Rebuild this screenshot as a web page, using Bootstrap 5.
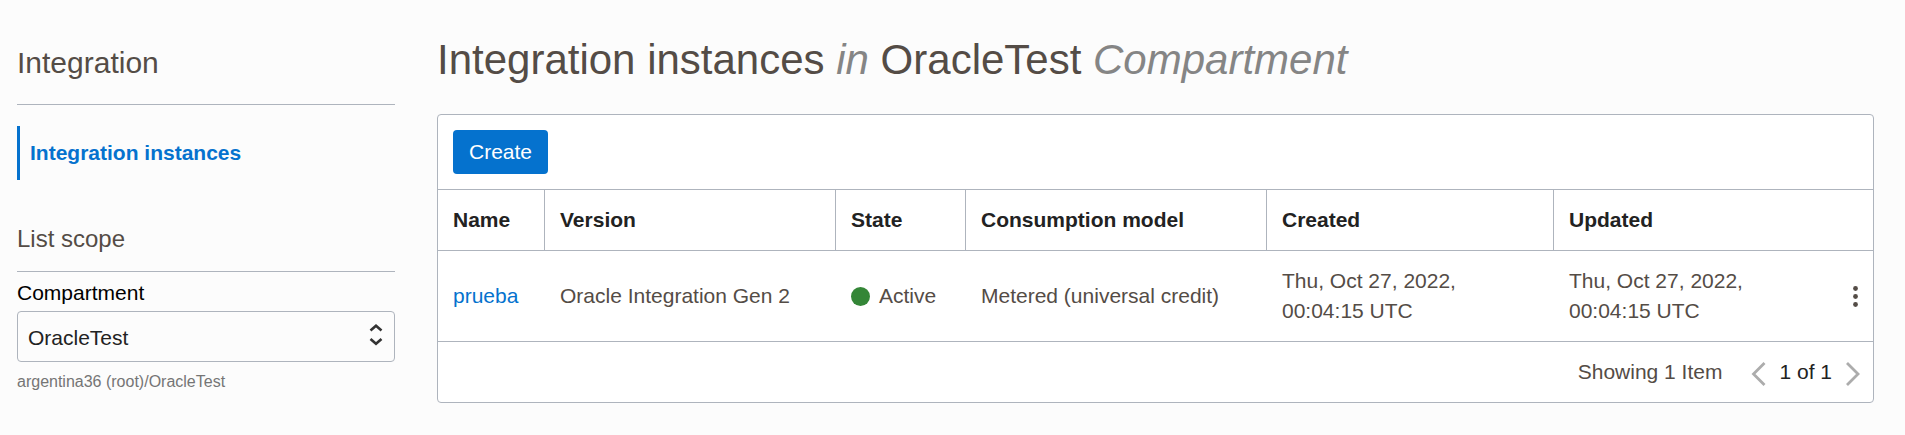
<!DOCTYPE html>
<html lang="en">
<head>
<meta charset="utf-8">
<meta name="viewport" content="width=device-width, initial-scale=1">
<title>Integration instances</title>
<link href="https://cdn.jsdelivr.net/npm/bootstrap@5.3.0/dist/css/bootstrap.min.css" rel="stylesheet">
<style>
  :root { --line: #aeb4bd; --ink: #544c46; --brand: #0572ce; --strong: #222; }
  body { background: #fcfcfc; color: var(--ink); font-family: "Liberation Sans", Arial, sans-serif; font-size: 21px; line-height: 30px; }
  a { color: var(--brand); }
  .page { padding: 35px 31px 33px 17px; gap: 42px; }
  .side { flex: 0 0 378px; padding-top: 10px; }
  .content { min-width: 0; }
  .side-title { font-size: 30px; line-height: 36px; font-weight: 400; padding-bottom: 23px; margin-bottom: 21px; border-bottom: 1px solid var(--line); }
  .side-link { border-left: 3px solid var(--brand); padding: 12px 10px; font-weight: 700; margin-bottom: 44px; }
  .scope-title { font-size: 24px; line-height: 30px; font-weight: 400; padding-bottom: 17px; margin-bottom: 6px; border-bottom: 1px solid var(--line); }
  .scope-label { color: #000; margin-bottom: 3px; }
  .scope-select { appearance: none; background: #fcfcfc; color: var(--strong); border: 1px solid var(--line); border-radius: 4px; padding: 11px 32px 8px 10px; font-size: 21px; line-height: 30px; }
  .scope-arrows { right: 12px; top: 12px; pointer-events: none; }
  .hint { font-size: 16px; line-height: 24px; color: #757575; margin-top: 8px; }
  .headline { font-size: 42px; line-height: 50px; font-weight: 400; margin-bottom: 29px; }
  .headline em { color: #858585; }
  .panel { background: #fff; border: 1px solid var(--line); border-radius: 4px; }
  .panel-tools { padding: 15px; border-bottom: 1px solid var(--line); }
  .btn-create { --bs-btn-color: #fff; --bs-btn-bg: var(--brand); --bs-btn-hover-color: #fff; --bs-btn-hover-bg: #045fab; border: 0; border-radius: 4px; padding: 7px 16px; font-size: 21px; line-height: 30px; }
  .grid-table { table-layout: fixed; border-collapse: separate; border-spacing: 0; min-width: 1300px; color: var(--ink); --bs-table-bg: #fff; --bs-table-color: var(--ink); }
  .grid-table > :not(caption) > * > * { padding: 15px; border-width: 0 0 1px; border-bottom: 1px solid var(--line); }
  .grid-table > thead > tr > th { color: var(--strong); }
  .grid-table > thead > tr > th:not(.last) { border-right: 1px solid var(--line); }
  .c-name { width: 107px; } .c-version { width: 291px; } .c-state { width: 130px; }
  .c-model { width: 301px; } .c-created { width: 287px; } .c-menu { width: 90px; }
  .dot { width: 19px; height: 19px; border-radius: 50%; background: #348637; margin-right: 9px; }
  .plain { background: none; border: 0; padding: 0; line-height: 0; }
  .pager { padding: 15px 12px; }
  .pager .plain { padding-top: 3px; }
  .pager .plain:disabled { color: #acacac; }
  .page-count { color: var(--strong); padding: 0 13px; }
</style>
</head>
<body>
<div class="page d-flex align-items-start">
  <aside class="side">
    <h2 class="side-title">Integration</h2>
    <nav><a class="side-link d-block text-decoration-none" href="#" aria-current="page">Integration instances</a></nav>
    <h3 class="scope-title">List scope</h3>
    <label class="scope-label d-block" for="compartment">Compartment</label>
    <div class="position-relative">
      <select class="scope-select d-block w-100" id="compartment"><option>OracleTest</option></select>
      <svg class="scope-arrows position-absolute" width="14" height="24" viewBox="0 0 14 24" fill="none" stroke="#333" stroke-width="2.6" aria-hidden="true"><path d="M1.5 7.5 7 2.8l5.500 4.700M1.500 16 7 20.700l5.500-4.700"/></svg>
    </div>
    <div class="hint">argentina36 (root)/OracleTest</div>
  </aside>
  <main class="content flex-fill">
    <h1 class="headline">Integration instances <em>in</em> OracleTest <em>Compartment</em></h1>
    <section class="panel">
      <div class="panel-tools"><button type="button" class="btn btn-create d-block">Create</button></div>
      <div class="table-responsive">
        <table class="table grid-table align-middle mb-0">
          <colgroup><col class="c-name"><col class="c-version"><col class="c-state"><col class="c-model"><col class="c-created"><col><col class="c-menu"></colgroup>
          <thead>
            <tr><th scope="col">Name</th><th scope="col">Version</th><th scope="col">State</th><th scope="col">Consumption model</th><th scope="col">Created</th><th scope="col" class="last" colspan="2">Updated</th></tr>
          </thead>
          <tbody>
            <tr>
              <td><a class="text-decoration-none" href="#">prueba</a></td>
              <td>Oracle Integration Gen 2</td>
              <td><span class="d-flex align-items-center"><span class="dot"></span>Active</span></td>
              <td>Metered (universal credit)</td>
              <td>Thu, Oct 27, 2022, 00:04:15 UTC</td>
              <td>Thu, Oct 27, 2022, 00:04:15 UTC</td>
              <td><button type="button" class="plain d-block ms-auto" aria-label="Actions"><svg width="5" height="21" viewBox="0 0 5 21" fill="#544c46"><circle cx="2.5" cy="2.5" r="2.4"/><circle cx="2.5" cy="10.5" r="2.4"/><circle cx="2.5" cy="18.5" r="2.4"/></svg></button></td>
            </tr>
          </tbody>
        </table>
      </div>
      <div class="pager d-flex justify-content-end align-items-center">
        <span class="me-4">Showing 1 Item</span>
        <button type="button" class="plain ms-1" disabled aria-label="Previous page"><svg width="16" height="26" viewBox="0 0 16 26" fill="none" stroke="currentColor" stroke-width="2.8"><path d="M14.500 2 3.500 13l11 11"/></svg></button>
        <span class="page-count">1 of 1</span>
        <button type="button" class="plain" disabled aria-label="Next page"><svg width="16" height="26" viewBox="0 0 16 26" fill="none" stroke="currentColor" stroke-width="2.8"><path d="m2 2 11 11L2 24"/></svg></button>
      </div>
    </section>
  </main>
</div>
<script src="https://cdn.jsdelivr.net/npm/bootstrap@5.3.0/dist/js/bootstrap.bundle.min.js"></script>
</body>
</html>
